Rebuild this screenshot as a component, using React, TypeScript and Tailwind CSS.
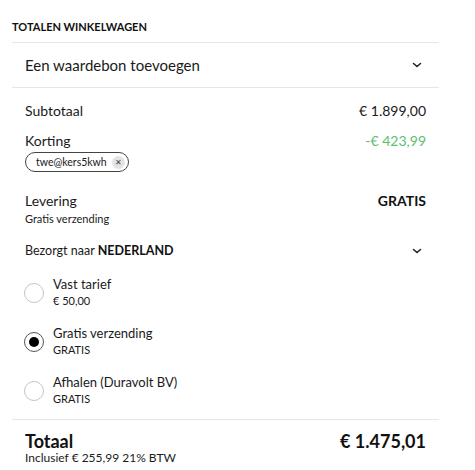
import React from "react";

function Chevron() {
  return (
    <svg width="10" height="6" viewBox="0 0 10 6" fill="none">
      <path d="M1.5 1.5 L5 4.5 L8.5 1.5" stroke="#222" strokeWidth="1.6" strokeLinecap="round" strokeLinejoin="round" />
    </svg>
  );
}

function Radio({ checked }: { checked?: boolean }) {
  return (
    <div
      className={
        "w-[20px] h-[20px] rounded-full border flex items-center justify-center shrink-0 " +
        (checked ? "border-[#555]" : "border-[#c4c4c4]")
      }
    >
      {checked && <div className="w-[10px] h-[10px] rounded-full bg-black" />}
    </div>
  );
}

function Option({ label, sub, checked }: { label: string; sub: string; checked?: boolean }) {
  return (
    <div className="flex items-center gap-[9px] pl-[12px]">
      <Radio checked={checked} />
      <div className="flex flex-col">
        <span className="text-[13px] leading-[17px] text-[#1a1a1a]">{label}</span>
        <span className="text-[11px] leading-[16px] text-[#1a1a1a]">{sub}</span>
      </div>
    </div>
  );
}

export default function App() {
  return (
    <div className="w-[475px] h-[470px] bg-white overflow-hidden" style={{ fontFamily: "Lato, 'Noto Sans', sans-serif" }}>
      <div className="mx-[12px] w-[427px]">
        <div className="pt-[20px] pb-[8px] text-[11px] font-bold text-[#111] leading-[14px]">TOTALEN WINKELWAGEN</div>
        <div className="border-t border-[#e6e6e6]" />
        <div className="h-[44px] flex items-center justify-between px-[13px]">
          <span className="text-[15px] text-[#1a1a1a]">Een waardebon toevoegen</span>
          <span className="mr-[4px]"><Chevron /></span>
        </div>
        <div className="border-t border-[#e6e6e6]" />
        <div className="px-[13px]">
          <div className="flex justify-between items-center mt-[12px] h-[20px]">
            <span className="text-[14px] text-[#1a1a1a]">Subtotaal</span>
            <span className="text-[14px] text-[#1a1a1a]">€ 1.899,00</span>
          </div>
          <div className="flex justify-between items-center mt-[10px] h-[20px]">
            <span className="text-[14px] text-[#1a1a1a]">Korting</span>
            <span className="text-[14px] text-[#5cbf6c]">-€ 423,99</span>
          </div>
          <div className="mt-[2px] flex w-fit items-center h-[20px] pl-[10px] pr-[3px] rounded-full border border-[#444] gap-[5px]">
            <span className="text-[10.5px] leading-none text-[#1a1a1a]">twe@kers5kwh</span>
            <span className="w-[13px] h-[13px] rounded-full bg-[#e4e4e4] flex items-center justify-center text-[8px] text-[#444] leading-none">✕</span>
          </div>
          <div className="flex justify-between items-center mt-[18px] h-[20px]">
            <span className="text-[14px] text-[#1a1a1a]">Levering</span>
            <span className="text-[14px] font-bold text-[#111]">GRATIS</span>
          </div>
          <div className="text-[11px] leading-[14px] text-[#1a1a1a] mt-[2px]">Gratis verzending</div>
          <div className="flex justify-between items-center mt-[15px] h-[20px]">
            <span className="text-[12.5px] text-[#1a1a1a]">Bezorgt naar <b className="font-bold text-[#111]">NEDERLAND</b></span>
            <span className="mr-[4px]"><Chevron /></span>
          </div>
        </div>
        <div className="flex flex-col gap-[16px] mt-[15px]">
          <Option label="Vast tarief" sub="€ 50,00" />
          <Option label="Gratis verzending" sub="GRATIS" checked />
          <Option label="Afhalen (Duravolt BV)" sub="GRATIS" />
        </div>
        <div className="border-t border-[#e6e6e6] mt-[12px]" />
        <div className="px-[13px] pt-[11px]">
          <div className="flex justify-between items-center h-[20px]">
            <span className="text-[18px] font-bold text-[#111]">Totaal</span>
            <span className="text-[18px] font-bold text-[#111]">€ 1.475,01</span>
          </div>
          <div className="text-[12px] leading-[14px] text-[#1a1a1a]">Inclusief € 255,99 21% BTW</div>
        </div>
      </div>
    </div>
  );
}
